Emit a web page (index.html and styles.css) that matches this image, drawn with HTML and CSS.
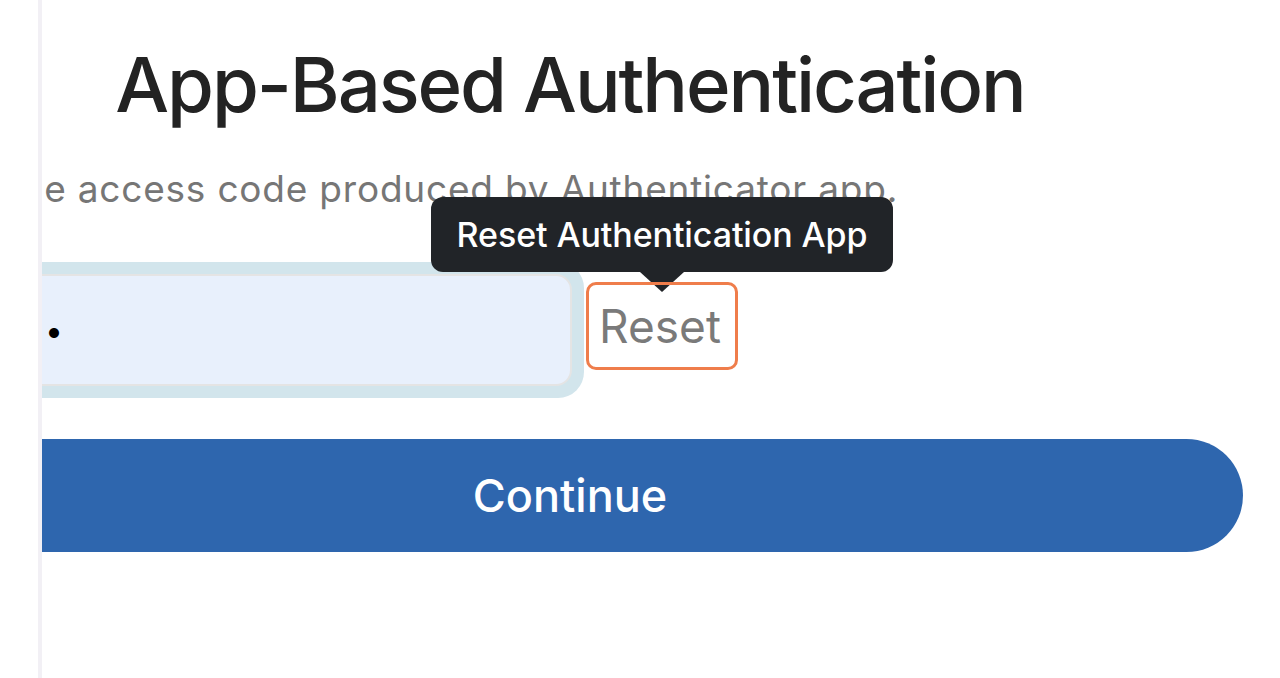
FILE: index.html
```html
<!DOCTYPE html>
<html lang="en">
<head>
<meta charset="utf-8">
<title>App-Based Authentication</title>
<link rel="stylesheet" href="styles.css">
</head>
<body>
<div class="shell">
  <aside class="rail"></aside>
  <main class="pane">
    <div class="form">
      <h1 class="title">App-Based Authentication</h1>
      <p class="lead">Enter the access code produced by Authenticator app.</p>
      <div class="code-row">
        <div class="field-ring">
          <input class="field" type="password" value="123456" aria-label="Access code">
        </div>
        <div class="reset-wrap">
          <button class="reset" type="button">Reset</button>
          <div class="tooltip" role="tooltip">Reset Authentication App</div>
        </div>
      </div>
      <button class="continue" type="button">Continue</button>
    </div>
  </main>
</div>
</body>
</html>
```

FILE: styles.css
```css
html, body {
  margin: 0;
  padding: 0;
  background: #ffffff;
}

body {
  font-family: Inter, "Noto Sans", "Liberation Sans", sans-serif;
}

.shell {
  display: flex;
  height: 678px;
}

.rail {
  width: 38px;
  flex: none;
  background: #ffffff;
}

.pane {
  flex: 1;
  border-left: 4px solid #f2f0f5;
  overflow: hidden;
  background: #ffffff;
}

.form {
  width: 1346px;
  margin-left: -145px;
  padding-top: 38px;
  display: flex;
  flex-direction: column;
}

.title {
  margin: 0;
  font-size: 76px;
  line-height: 92px;
  font-weight: 500;
  color: #232323;
  text-align: center;
  letter-spacing: -2.1px;
}

.lead {
  margin: 37px 0 0;
  padding-left: 5px;
  font-size: 37px;
  line-height: 44px;
  color: #767676;
  white-space: nowrap;
  letter-spacing: 0.8px;
}

.code-row {
  margin-top: 51px;
  display: flex;
  align-items: center;
  gap: 2px;
}

.field-ring {
  width: 687px;
  box-sizing: border-box;
  padding: 12px;
  background: #d2e5ec;
  border-radius: 26px;
}

.field {
  display: block;
  width: 100%;
  height: 112px;
  box-sizing: border-box;
  border: 2px solid #e4e4e4;
  border-radius: 16px;
  background: #e8f0fc;
  padding: 0 0 0 24px;
  font-family: inherit;
  font-size: 32px;
  letter-spacing: 4px;
  color: #000;
  outline: none;
}

.reset-wrap {
  position: relative;
  margin-top: -8px;
}

.reset {
  position: relative;
  z-index: 2;
  display: block;
  width: 152px;
  height: 88px;
  box-sizing: border-box;
  border: 3.5px solid #ef7d4b;
  border-radius: 10px;
  background: transparent;
  font-family: inherit;
  font-size: 46px;
  color: #7a7a7a;
  padding: 0 4px 0 0;
  cursor: pointer;
}

.tooltip {
  position: absolute;
  z-index: 1;
  left: 50%;
  bottom: calc(100% + 10px);
  transform: translateX(-50%);
  width: 462px;
  height: 75px;
  box-sizing: border-box;
  display: flex;
  align-items: center;
  justify-content: center;
  background: #212428;
  color: #ffffff;
  border-radius: 12px;
  font-size: 34px;
  font-weight: 500;
  white-space: nowrap;
  letter-spacing: -0.1px;
}

.tooltip::after {
  content: "";
  position: absolute;
  left: 50%;
  top: 100%;
  transform: translateX(-50%);
  border-left: 22px solid transparent;
  border-right: 22px solid transparent;
  border-top: 20px solid #212428;
}

.continue {
  margin-top: 41px;
  width: 1346px;
  height: 113px;
  border: none;
  border-radius: 57px;
  background: #2e66ae;
  color: #ffffff;
  font-family: inherit;
  font-size: 45px;
  font-weight: 500;
  padding: 0;
  cursor: pointer;
}
```
